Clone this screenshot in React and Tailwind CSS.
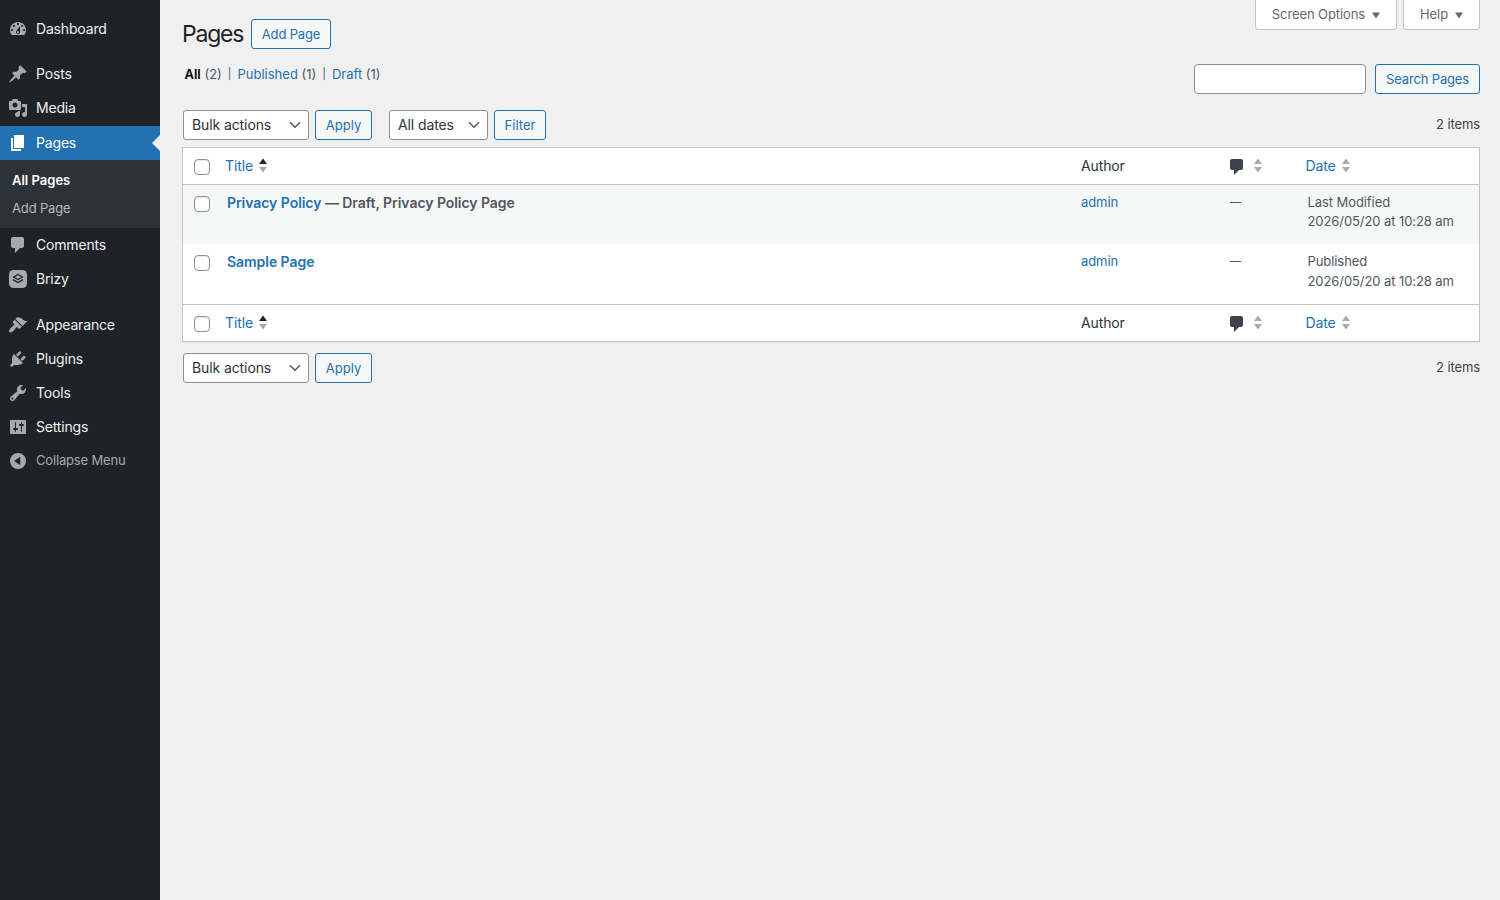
import { useState } from 'react';
import clsx from 'clsx';

const icons = {
  dashboard:
    'M3.76 16h12.48c1.1-1.37 1.76-3.11 1.76-5 0-4.42-3.58-8-8-8s-8 3.58-8 8c0 1.89.66 3.63 1.76 5zM10 4c.55 0 1 .45 1 1s-.45 1-1 1-1-.45-1-1 .45-1 1-1zM6 6c.55 0 1 .45 1 1s-.45 1-1 1-1-.45-1-1 .45-1 1-1zm8 0c.55 0 1 .45 1 1s-.45 1-1 1-1-.45-1-1 .45-1 1-1zm-5.37 5.55L12 7v6c0 1.1-.9 2-2 2s-2-.9-2-2c0-.57.24-1.08.63-1.45zM4 10c.55 0 1 .45 1 1s-.45 1-1 1-1-.45-1-1 .45-1 1-1zm12 0c.55 0 1 .45 1 1s-.45 1-1 1-1-.45-1-1 .45-1 1-1zm-5 3c0-.55-.45-1-1-1s-1 .45-1 1 .45 1 1 1 1-.45 1-1z',
  posts:
    'M10.44 3.02l1.82-1.82 6.36 6.35-1.83 1.82c-1.05-.68-2.48-.57-3.41.36l-.75.75c-.92.93-1.04 2.35-.35 3.41l-1.83 1.82-2.41-2.41-2.8 2.79c-.42.42-3.38 2.71-3.8 2.29s1.86-3.39 2.28-3.81l2.79-2.79L4.1 9.36l1.83-1.82c1.05.69 2.48.57 3.4-.36l.75-.75c.93-.92 1.05-2.35.36-3.41z',
  media:
    'M13 11V4c0-.55-.45-1-1-1h-1.67L9 1H5L3.67 3H2c-.55 0-1 .45-1 1v7c0 .55.45 1 1 1h10c.55 0 1-.45 1-1zM7 4.5c1.38 0 2.5 1.12 2.5 2.5S8.38 9.5 7 9.5 4.5 8.38 4.5 7 5.62 4.5 7 4.5zM14 6h5v10.5c0 1.38-1.12 2.5-2.5 2.5S14 17.88 14 16.5s1.12-2.5 2.5-2.5c.17 0 .34.02.5.05V9h-3V6zm-4 8.05V13h2v3.5c0 1.38-1.12 2.5-2.5 2.5S7 17.88 7 16.5 8.12 14 9.5 14c.17 0 .34.02.5.05z',
  pages: 'M6 15V2h10v13H6zm-1 1h8v2H3V5h2v11z',
  comments:
    'M5 2h9c1.1 0 2 .9 2 2v7c0 1.1-.9 2-2 2h-2l-5 5v-5H5c-1.1 0-2-.9-2-2V4c0-1.1.9-2 2-2z',
  appearance:
    'M14.48 11.06L7.41 3.99l1.5-1.5c.5-.56 2.3-.47 3.51.32 1.21.8 1.43 1.28 2.91 2.1 1.18.64 2.45 1.26 4.45.85zm-.71.71L6.7 4.7 4.93 6.47c-.39.39-.39 1.02 0 1.41l1.06 1.06c.39.39.39 1.03 0 1.42-.6.6-1.43 1.11-2.21 1.69-.35.26-.7.53-1.01.84C1.43 14.23.4 16.08 1.4 17.07c.99 1 2.84-.03 4.18-1.36.31-.31.58-.66.85-1.02.57-.78 1.08-1.61 1.69-2.21.39-.39 1.02-.39 1.41 0l1.06 1.06c.39.39 1.02.39 1.41 0z',
  plugins:
    'M13.11 4.36L9.87 7.6 8 5.73l3.24-3.24c.35-.34 1.05-.2 1.56.32.52.51.66 1.21.31 1.55zm-8 1.77l.91-1.12 9.01 9.01-1.19.84c-.71.71-2.63 1.16-3.82 1.16H6.14L4.9 17.26c-.59.59-1.54.59-2.12 0-.59-.58-.59-1.53 0-2.12l1.24-1.24v-3.88c0-1.13.4-3.19 1.09-3.89zm7.26 3.97l3.24-3.24c.34-.35 1.04-.21 1.55.31.52.51.66 1.21.31 1.55l-3.24 3.25z',
  tools:
    'M16.68 9.77c-1.34 1.34-3.3 1.67-4.95.99l-5.41 6.52c-.99.99-2.59.99-3.58 0s-.99-2.59 0-3.57l6.52-5.42c-.68-1.65-.35-3.61.99-4.95 1.28-1.28 3.12-1.62 4.72-1.06l-2.89 2.89 2.82 2.82 2.86-2.87c.53 1.58.18 3.39-1.08 4.65zM3.81 16.21c.4.39 1.04.39 1.43 0 .4-.4.4-1.04 0-1.43-.39-.4-1.03-.4-1.43 0-.39.39-.39 1.03 0 1.43z',
  settings:
    'M18 16V4c0-.55-.45-1-1-1H3c-.55 0-1 .45-1 1v12c0 .55.45 1 1 1h14c.55 0 1-.45 1-1zM8 11h1c.55 0 1 .45 1 1s-.45 1-1 1H8v1.5c0 .28-.22.5-.5.5s-.5-.22-.5-.5V13H6c-.55 0-1-.45-1-1s.45-1 1-1h1V5.5c0-.28.22-.5.5-.5s.5.22.5.5V11zm5-2h-1c-.55 0-1-.45-1-1s.45-1 1-1h1V5.5c0-.28.22-.5.5-.5s.5.22.5.5V7h1c.55 0 1 .45 1 1s-.45 1-1 1h-1v5.5c0 .28-.22.5-.5.5s-.5-.22-.5-.5V9z',
  collapse: 'M10 2a8 8 0 1 0 0 16 8 8 0 0 0 0-16zM12.2 5.8v8.4L6.2 10z',
};

const pages = [
  { id: 1, title: 'Privacy Policy', state: 'Draft, Privacy Policy Page', author: 'admin', status: 'Last Modified', date: '2026/05/20 at 10:28 am' },
  { id: 2, title: 'Sample Page', author: 'admin', status: 'Published', date: '2026/05/20 at 10:28 am' },
];

function Icon({ name, className }) {
  return (
    <svg viewBox="0 0 20 20" fill="currentColor" fillRule="evenodd" className={clsx('w-5 h-5 shrink-0', className)}>
      <path d={icons[name]} />
    </svg>
  );
}

function BrizyIcon() {
  return (
    <svg viewBox="0 0 20 20" className="w-5 h-5 shrink-0 text-[#a7aaad]">
      <rect x="1" y="1" width="18" height="18" rx="4.5" fill="currentColor" />
      <path d="M10 5.5l4.6 2.5-4.6 2.5L5.4 8z" fill="none" stroke="#1d2327" strokeWidth="1.3" strokeLinejoin="round" />
      <path d="M5 10.7l5 2.8 5-2.8" fill="none" stroke="#1d2327" strokeWidth="1.4" />
    </svg>
  );
}

function MenuItem({ icon, label, current }) {
  return (
    <a
      href="#"
      className={clsx(
        'relative flex items-center h-[34px] pl-2 gap-2 text-sm tracking-[-0.17px]',
        current ? 'bg-[#2271b1] text-white' : 'text-[#f0f0f1]'
      )}
    >
      {icon === 'brizy' ? <BrizyIcon /> : <Icon name={icon} className={current ? 'text-white' : 'text-[#a7aaad]'} />}
      <span>{label}</span>
      {current && (
        <span className="absolute right-0 top-[9px] border-y-8 border-y-transparent border-r-8 border-r-[#f0f0f1]"></span>
      )}
    </a>
  );
}

function Sidebar() {
  return (
    <nav className="w-40 shrink-0 bg-[#1d2327] pt-3">
      <MenuItem icon="dashboard" label="Dashboard" />
      <div className="h-[11px]"></div>
      <MenuItem icon="posts" label="Posts" />
      <MenuItem icon="media" label="Media" />
      <div className="h-px"></div>
      <MenuItem icon="pages" label="Pages" current />
      <div className="flex flex-col h-[68px] pt-1.5 px-3 bg-[#2c3338] text-[13px] leading-7">
        <a href="#" className="font-semibold text-white">All Pages</a>
        <a href="#" className="tracking-[-0.15px] text-[#b7babd]">Add Page</a>
      </div>
      <MenuItem icon="comments" label="Comments" />
      <MenuItem icon="brizy" label="Brizy" />
      <div className="h-3"></div>
      <MenuItem icon="appearance" label="Appearance" />
      <MenuItem icon="plugins" label="Plugins" />
      <MenuItem icon="tools" label="Tools" />
      <MenuItem icon="settings" label="Settings" />
      <button className="flex items-center h-[34px] pl-2 gap-2 text-[13px] tracking-[-0.17px] text-[#a7aaad]">
        <Icon name="collapse" />
        <span>Collapse Menu</span>
      </button>
    </nav>
  );
}

function Button({ children, className }) {
  return (
    <button
      className={clsx(
        'h-[30px] pt-0.5 rounded-[3px] border border-[#2271b1] bg-[#f6f7f7] text-[13px] text-[#2271b1] whitespace-nowrap',
        className
      )}
    >
      {children}
    </button>
  );
}

function Select({ label, className }) {
  return (
    <button
      className={clsx(
        'flex items-center justify-between h-[30px] pl-2 pr-[5px] rounded-[3px] border border-[#8c8f94] bg-white text-sm tracking-[-0.1px] text-[#2c3338]',
        className
      )}
    >
      <span>{label}</span>
      <svg viewBox="0 0 16 16" className="w-4 h-4">
        <path d="M3 5.3l5 5 5-5" fill="none" stroke="#50575e" strokeWidth="1.5" />
      </svg>
    </button>
  );
}

function ScreenTab({ label }) {
  return (
    <button className="flex items-center gap-[7px] h-[30px] px-4 rounded-b border border-t-0 border-[#c3c4c7] bg-white text-[13px] tracking-[-0.1px] text-[#646970]">
      <span>{label}</span>
      <svg viewBox="0 0 8 7" className="w-2 h-[7px] mt-px">
        <path d="M0 .5h8L4 6.5z" fill="#646970" />
      </svg>
    </button>
  );
}

function SortArrows({ active }) {
  return (
    <svg viewBox="0 0 8 15" className="w-2 h-[15px] -mt-px">
      <path d="M4 .5l4 5.5H0z" fill={active ? '#1d2327' : '#a7aaad'} />
      <path d="M0 9h8l-4 5.5z" fill="#a7aaad" />
    </svg>
  );
}

function Checkbox({ checked, onChange, className }) {
  return (
    <input
      type="checkbox"
      checked={checked}
      onChange={onChange}
      className={clsx(
        'block appearance-none w-4 h-4 ml-[11px] rounded border border-[#8c8f94] bg-white shadow-[inset_0_1px_2px_rgba(0,0,0,0.1)] checked:bg-[#2271b1]',
        className
      )}
    />
  );
}

function HeadingRow({ checked, onToggle, className }) {
  return (
    <div
      className={clsx(
        'grid grid-cols-[42px_1fr_149px_75.5px_173.5px] items-center h-[37px] border-[#c3c4c7] text-sm tracking-[-0.12px] text-[#2c3338]',
        className
      )}
    >
      <Checkbox checked={checked} onChange={onToggle} className="mt-0.5" />
      <a href="#" className="flex items-center gap-1.5 text-[#2271b1]">
        <span>Title</span>
        <SortArrows active />
      </a>
      <span>Author</span>
      <a href="#" className="flex items-center gap-[7px]">
        <Icon name="comments" className="-ml-[3px] mt-px text-[#3c434a]" />
        <SortArrows />
      </a>
      <a href="#" className="flex items-center gap-1.5 text-[#2271b1]">
        <span>Date</span>
        <SortArrows />
      </a>
    </div>
  );
}

export default function App() {
  const [selected, setSelected] = useState([]);
  const [search, setSearch] = useState('');

  const allSelected = selected.length === pages.length;

  const toggle = (id) => {
    setSelected(selected.includes(id) ? selected.filter((s) => s !== id) : [...selected, id]);
  };

  const toggleAll = () => {
    setSelected(allSelected ? [] : pages.map((p) => p.id));
  };

  return (
    <div className="flex min-h-screen bg-[#f0f0f1] font-['Inter','Liberation_Sans',sans-serif] text-[13px] text-[#3c434a]">
      <Sidebar />

      <main className="flex-1 pl-[22px] pr-5">
        {/* Page heading and screen tabs */}
        <div className="flex items-start justify-between h-16">
          <div className="flex items-center pt-[19px]">
            <h1 className="w-[69px] text-[23px] leading-[30px] tracking-[-1.2px] text-[#1d2327]">Pages</h1>
            <Button className="w-20 tracking-[-0.15px]">Add Page</Button>
          </div>
          <div className="flex gap-1.5">
            <ScreenTab label="Screen Options" />
            <ScreenTab label="Help" />
          </div>
        </div>

        <div className="flex items-start justify-between h-[46px]">
          <ul className="flex pl-[2.5px] leading-5 text-[#50575e]">
            <li><a href="#" className="font-semibold text-black">All</a> (2)</li>
            <li className="px-1.5 text-[11px]">|</li>
            <li><a href="#" className="text-[#2271b1]">Published</a> (1)</li>
            <li className="px-1.5 text-[11px]">|</li>
            <li><a href="#" className="text-[#2271b1]">Draft</a> (1)</li>
          </ul>
          <div className="flex gap-[9px]">
            <input
              type="search"
              value={search}
              onChange={(e) => setSearch(e.target.value)}
              className="w-[172px] h-[30px] px-2 rounded border border-[#8c8f94] bg-white"
            />
            <Button className="w-[105px] tracking-[-0.15px]">Search Pages</Button>
          </div>
        </div>

        <div className="flex items-center h-[30px] pl-px">
          <Select label="Bulk actions" className="w-[126px] mr-1.5" />
          <Button className="w-[57px] mr-[17px]">Apply</Button>
          <Select label="All dates" className="w-[99px] mr-1.5" />
          <Button className="w-[52px]">Filter</Button>
          <span className="ml-auto tracking-[-0.1px]">2 items</span>
        </div>

        {/* Pages table */}
        <div className="mt-[7px] border border-[#c3c4c7] bg-white shadow-[0_1px_1px_rgba(0,0,0,0.04)]">
          <HeadingRow checked={allSelected} onToggle={toggleAll} className="border-b" />
          {pages.map((page, i) => (
            <div
              key={page.id}
              className={clsx(
                'grid grid-cols-[42px_1fr_149px_75.5px_173.5px] pt-2 tracking-[-0.08px] text-[#50575e]',
                i % 2 === 0 ? 'h-[59px] bg-[#f6f7f7] leading-[19px]' : 'h-[60px] leading-[19.5px]'
              )}
            >
              <Checkbox checked={selected.includes(page.id)} onChange={() => toggle(page.id)} className="mt-[3px]" />
              <div className="pl-0.5 text-sm leading-5 font-semibold tracking-[-0.05px]">
                <a href="#" className="text-[#2271b1]">{page.title}</a>
                {page.state && <span> — {page.state}</span>}
              </div>
              <a href="#" className="text-[#2271b1]">{page.author}</a>
              <span className="text-[11px]">—</span>
              <div className="pl-0.5">
                <p>{page.status}</p>
                <p>{page.date}</p>
              </div>
            </div>
          ))}
          <HeadingRow checked={allSelected} onToggle={toggleAll} className="border-t" />
        </div>

        <div className="flex items-center h-[30px] mt-[11px] pl-px">
          <Select label="Bulk actions" className="w-[126px] mr-1.5" />
          <Button className="w-[57px]">Apply</Button>
          <span className="ml-auto tracking-[-0.1px]">2 items</span>
        </div>
      </main>
    </div>
  );
}
